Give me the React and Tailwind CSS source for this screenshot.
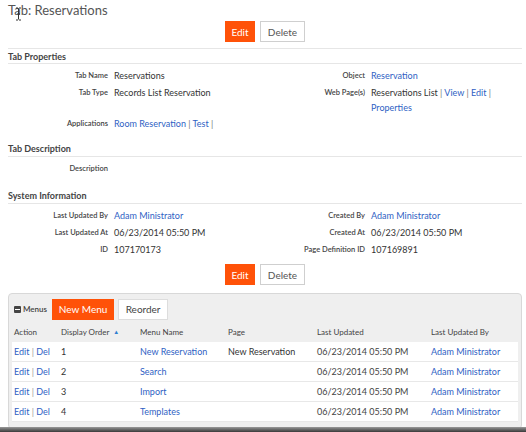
import React from "react";

const font = { fontFamily: "Lato, 'Open Sans', sans-serif" };

function Buttons() {
  return (
    <div className="flex justify-center gap-[5px]">
      <button className="h-[21px] w-[30px] bg-[#ff5208] text-white text-[10px] leading-none">Edit</button>
      <button className="h-[21px] w-[45px] bg-white border border-[#cfcfcf] text-[#555] text-[10px] leading-none">Delete</button>
    </div>
  );
}

function SectionHeader({ children, top }) {
  return (
    <div className={`h-[16px] flex items-center pt-[1px] border-b border-[#e6e6e6] text-[9px] font-bold text-[#444] ${top ? "border-t" : ""}`}>
      {children}
    </div>
  );
}

function Field({ label, children, lw = "w-[100px]", lh = "leading-[16px]" }) {
  return (
    <div className={`flex items-start ${lh}`}>
      <div className={`${lw} shrink-0 text-right text-[7.5px] font-semibold text-[#444]`}>{label}</div>
      <div className="pl-[6px] text-[9px] text-[#333]">{children}</div>
    </div>
  );
}

const A = ({ children }) => <span className="text-[#2f5fc4]">{children}</span>;
const Sep = () => <span className="text-[#777]"> | </span>;

function Row({ left, right }) {
  return (
    <div className="grid grid-cols-[255px_1fr]">
      <div>{left}</div>
      <div>{right}</div>
    </div>
  );
}

const cols = "grid grid-cols-[47px_79px_88px_89px_114px_1fr]";

function MenuRow({ n, name, page }) {
  return (
    <div className={`${cols} h-[20px] items-center bg-white border-b border-[#e8e8e8] text-[9px] text-[#333]`}>
      <div className="pl-[2px]"><A>Edit</A><span className="text-[#999]"> | </span><A>Del</A></div>
      <div className="pl-[2px]">{n}</div>
      <div className="pl-[2px]"><A>{name}</A></div>
      <div className="pl-[2px]">{page}</div>
      <div className="pl-[2px] text-[#444]">06/23/2014 05:50 PM</div>
      <div className="pl-[2px]"><A>Adam Ministrator</A></div>
    </div>
  );
}

export default function App() {
  return (
    <div className="relative w-[526px] h-[432px] bg-white overflow-hidden" style={font}>
      <div className="pl-[8px] pr-[4px]">
        <div className="h-[21px] pt-[1px] text-[13px] leading-[18px] text-[#555]">Tab: Reservations</div>
        <Buttons />
        <div className="h-[6px]" />
        <SectionHeader top>Tab Properties</SectionHeader>
        <div className="pt-[4px] flex flex-col gap-[1px]">
          <Row
            left={<Field label="Tab Name">Reservations</Field>}
            right={<Field label="Object" lw="w-[102px]"><A>Reservation</A></Field>}
          />
          <Row
            left={<Field label="Tab Type">Records List Reservation</Field>}
            right={
              <Field label="Web Page(s)" lw="w-[102px]" lh="leading-[15px]">
                Reservations List<Sep /><A>View</A><Sep /><A>Edit</A><Sep />
                <br />
                <A>Properties</A>
              </Field>
            }
          />
          <Row left={<Field label="Applications"><A>Room Reservation</A><Sep /><A>Test</A><Sep /></Field>} right={null} />
        </div>
        <div className="h-[9px]" />
        <SectionHeader>Tab Description</SectionHeader>
        <div className="pt-[4px]">
          <Field label="Description"> </Field>
        </div>
        <div className="h-[11px]" />
        <SectionHeader>System Information</SectionHeader>
        <div className="pt-[4px] flex flex-col gap-[1px]">
          <Row
            left={<Field label="Last Updated By"><A>Adam Ministrator</A></Field>}
            right={<Field label="Created By" lw="w-[102px]"><A>Adam Ministrator</A></Field>}
          />
          <Row
            left={<Field label="Last Updated At">06/23/2014 05:50 PM</Field>}
            right={<Field label="Created At" lw="w-[102px]">06/23/2014 05:50 PM</Field>}
          />
          <Row
            left={<Field label="ID">107170173</Field>}
            right={<Field label="Page Definition ID" lw="w-[102px]">107169891</Field>}
          />
        </div>
        <div className="h-[6px]" />
        <Buttons />
        <div className="h-[8px]" />
        <div className="h-[136px] rounded-[4px] border border-[#d8d8d8] bg-[#efefef] px-[3px]">
          <div className="flex items-center h-[28px] pt-[2px]">
            <span className="ml-[2px] w-[7px] h-[7px] bg-[#444] rounded-[1px] flex items-center justify-center">
              <span className="w-[5px] h-[1px] bg-white" />
            </span>
            <span className="ml-[2px] text-[8px] font-semibold text-[#444]">Menus</span>
            <button className="ml-[5px] h-[21px] w-[62px] bg-[#ff5208] text-white text-[10px] leading-none">New Menu</button>
            <button className="ml-[4px] h-[21px] w-[50px] bg-white border border-[#ddd] text-[#444] text-[10px] leading-none">Reorder</button>
          </div>
          <div className={`${cols} h-[19px] items-center text-[8px] text-[#444]`}>
            <div className="pl-[2px]">Action</div>
            <div className="pl-[2px] flex items-center">Display Order<span className="ml-[4px] text-[6px] text-[#2f7fd0]">▲</span></div>
            <div className="pl-[2px]">Menu Name</div>
            <div className="pl-[2px]">Page</div>
            <div className="pl-[2px]">Last Updated</div>
            <div className="pl-[2px]">Last Updated By</div>
          </div>
          <div className="mt-[1px]">
            <MenuRow n="1" name="New Reservation" page="New Reservation" />
            <MenuRow n="2" name="Search" page="" />
            <MenuRow n="3" name="Import" page="" />
            <MenuRow n="4" name="Templates" page="" />
          </div>
        </div>
      </div>
      <div className="absolute left-0 right-0 bottom-0 h-[5px] bg-gradient-to-b from-[#9a9a9a] to-[#3a3a3a]" />
      <svg className="absolute left-[15px] top-[7px]" width="7" height="14" viewBox="0 0 7 14">
        <path d="M1 1h2M4 1h2M3.5 1.5v11M1 13h2M4 13h2M2 7h3" stroke="#333" strokeWidth="1" fill="none" />
      </svg>
    </div>
  );
}
